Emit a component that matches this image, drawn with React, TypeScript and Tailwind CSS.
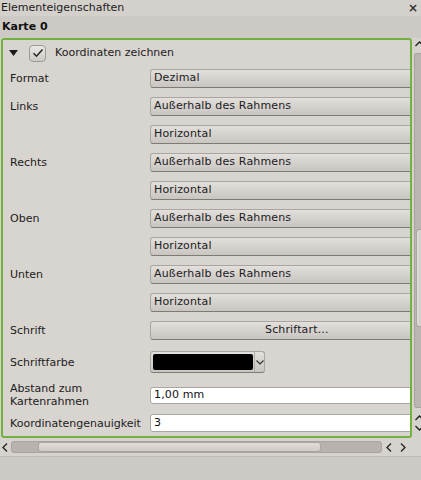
import React from "react";

const font = { fontFamily: '"DejaVu Sans", "Liberation Sans", sans-serif' };

const Combo = ({ text, pad = "pl-[3px]" }: { text: string; pad?: string }) => (
  <div
    className={`flex-1 mr-[-24px] h-[19px] flex items-center rounded-[3px] border border-[#a9a5a1] border-b-[#7e7a76] bg-gradient-to-b from-[#e2dfdc] to-[#c9c5c1] text-[11px] tracking-[0.15px] text-[#1c1c1c] ${pad}`}
  >
    {text}
  </div>
);

const Row = ({ label, h = "h-[28px]", children }: { label: React.ReactNode; h?: string; children?: React.ReactNode }) => (
  <div className={`flex items-center ${h}`}>
    <div className="w-[147px] shrink-0 pl-[7px] text-[11px] leading-[13px] text-[#1c1c1c]">{label}</div>
    <div className="flex-1 flex items-center">{children}</div>
  </div>
);

export default function App() {
  return (
    <div className="w-[421px] h-[480px] bg-[#d6d2ce] flex flex-col overflow-hidden" style={font}>
      {/* title */}
      <div className="h-[16px] flex items-center justify-between pl-[1px] pr-[3px] text-[11px] text-[#1c1c1c] bg-[#d4d0cc]">
        <span>Elementeigenschaften</span>
        <span className="text-[12px] leading-none font-bold text-[#333]">×</span>
      </div>
      {/* Karte header */}
      <div className="h-[22px] flex items-center pl-[2px] text-[11px] font-bold text-[#111] bg-[#cdc9c5]">Karte 0</div>

      <div className="flex h-[418px]">
        <div className="w-[413px] flex flex-col">
          {/* green frame */}
          <div className="ml-[1px] w-[411px] h-[400px] border-2 border-[#72b33f] rounded-[3px] bg-[#d8d4d0] flex flex-col overflow-hidden">
            <div className="h-[24px] shrink-0 pt-[2px] flex items-center">
              <svg width="9" height="6" viewBox="0 0 9 6" className="ml-[6px]">
                <polygon points="0,0 9,0 4.5,6" fill="#1a1a1a" />
              </svg>
              <div className="ml-[11px] w-[17px] h-[17px] rounded-[4px] border border-[#9d9995] bg-gradient-to-b from-[#ebe8e5] to-[#cdc9c5] flex items-center justify-center">
                <svg width="12" height="10" viewBox="0 0 12 10">
                  <path d="M1.5 5.2 L4.5 8.2 L10.5 1.5" fill="none" stroke="#2a2a2a" strokeWidth="1.6" />
                </svg>
              </div>
              <span className="ml-[9px] text-[11px] text-[#1c1c1c]">Koordinaten zeichnen</span>
            </div>
            <Row label="Format"><Combo text="Dezimal" /></Row>
            <Row label="Links"><Combo text="Außerhalb des Rahmens" /></Row>
            <Row label=""><Combo text="Horizontal" /></Row>
            <Row label="Rechts"><Combo text="Außerhalb des Rahmens" /></Row>
            <Row label=""><Combo text="Horizontal" /></Row>
            <Row label="Oben"><Combo text="Außerhalb des Rahmens" /></Row>
            <Row label=""><Combo text="Horizontal" /></Row>
            <Row label="Unten"><Combo text="Außerhalb des Rahmens" /></Row>
            <Row label=""><Combo text="Horizontal" /></Row>
            <Row label="Schrift"><Combo text="Schriftart..." pad="pl-[114px]" /></Row>
            <Row label="Schriftfarbe" h="h-[36px]">
              <div className="w-[115px] h-[22px] flex items-center rounded-[3px] border border-[#a9a5a1] border-b-[#7e7a76] bg-gradient-to-b from-[#e2dfdc] to-[#c9c5c1]">
                <div className="ml-[2px] w-[100px] h-[16px] bg-black rounded-[2px]" />
                <div className="ml-[1px] h-full border-l border-[#b0aca8] flex-1 flex items-center justify-center">
                  <svg width="8" height="5" viewBox="0 0 8 5">
                    <path d="M0.5 0.5 L4 4 L7.5 0.5" fill="none" stroke="#333" strokeWidth="1.2" />
                  </svg>
                </div>
              </div>
            </Row>
            <Row label={<>Abstand zum<br />Kartenrahmen</>} h="h-[30px]">
              <div className="flex-1 mr-[-24px] h-[17px] bg-white border border-[#aaa6a2] rounded-[3px] flex items-center pl-[3px] text-[11px] tracking-[0.15px] text-[#111]">1,00 mm</div>
            </Row>
            <Row label="Koordinatengenauigkeit" h="h-[26px]">
              <div className="flex-1 mr-[-24px] h-[18px] bg-white border border-[#aaa6a2] rounded-[3px] flex items-center pl-[3px] text-[11px] text-[#111]">3</div>
            </Row>
          </div>

          {/* horizontal scrollbar */}
          <div className="h-[18px] flex items-center">
            <svg width="8" height="9" viewBox="0 0 8 9" className="ml-[1px]">
              <path d="M6 0.5 L2 4.5 L6 8.5" fill="none" stroke="#222" strokeWidth="1.3" />
            </svg>
            <div className="ml-[2px] w-[371px] h-[12px] rounded-[3px] bg-[#b7b2ad] border border-[#a8a39e] flex items-center">
              <div className="ml-[26px] w-[283px] h-[10px] rounded-[3px] bg-gradient-to-b from-[#e0ddda] to-[#cfcbc7] border border-[#aaa6a2]" />
            </div>
            <svg width="8" height="9" viewBox="0 0 8 9" className="ml-[3px]">
              <path d="M6 0.5 L2 4.5 L6 8.5" fill="none" stroke="#222" strokeWidth="1.3" />
            </svg>
            <svg width="8" height="9" viewBox="0 0 8 9" className="ml-[6px]">
              <path d="M2 0.5 L6 4.5 L2 8.5" fill="none" stroke="#222" strokeWidth="1.3" />
            </svg>
          </div>
        </div>

        {/* vertical scrollbar */}
        <div className="w-[8px] flex flex-col">
          <svg width="8" height="9" viewBox="0 0 8 9" className="mt-[2px] ml-[2px]">
            <path d="M0.5 6 L4.5 2 L8.5 6" fill="none" stroke="#222" strokeWidth="1.3" />
          </svg>
          <div className="mt-[4px] ml-[1px] h-[355px] rounded-l-[3px] bg-[#bbb6b1] border border-r-0 border-[#a8a39e] flex flex-col">
            <div className="mt-[175px] ml-[1px] h-[98px] rounded-l-[3px] bg-gradient-to-r from-[#e0ddda] to-[#d0ccc8] border border-r-0 border-[#aaa6a2]" />
          </div>
          <svg width="8" height="9" viewBox="0 0 8 9" className="mt-[6px] ml-[2px]">
            <path d="M0.5 6 L4.5 2 L8.5 6" fill="none" stroke="#222" strokeWidth="1.3" />
          </svg>
          <svg width="8" height="9" viewBox="0 0 8 9" className="mt-[1px] ml-[2px]">
            <path d="M0.5 2 L4.5 6 L8.5 2" fill="none" stroke="#222" strokeWidth="1.3" />
          </svg>
        </div>
      </div>

      {/* footer */}
      <div className="flex-1 border-t border-[#bdb9b5] bg-[#cdc9c5]" />
    </div>
  );
}
